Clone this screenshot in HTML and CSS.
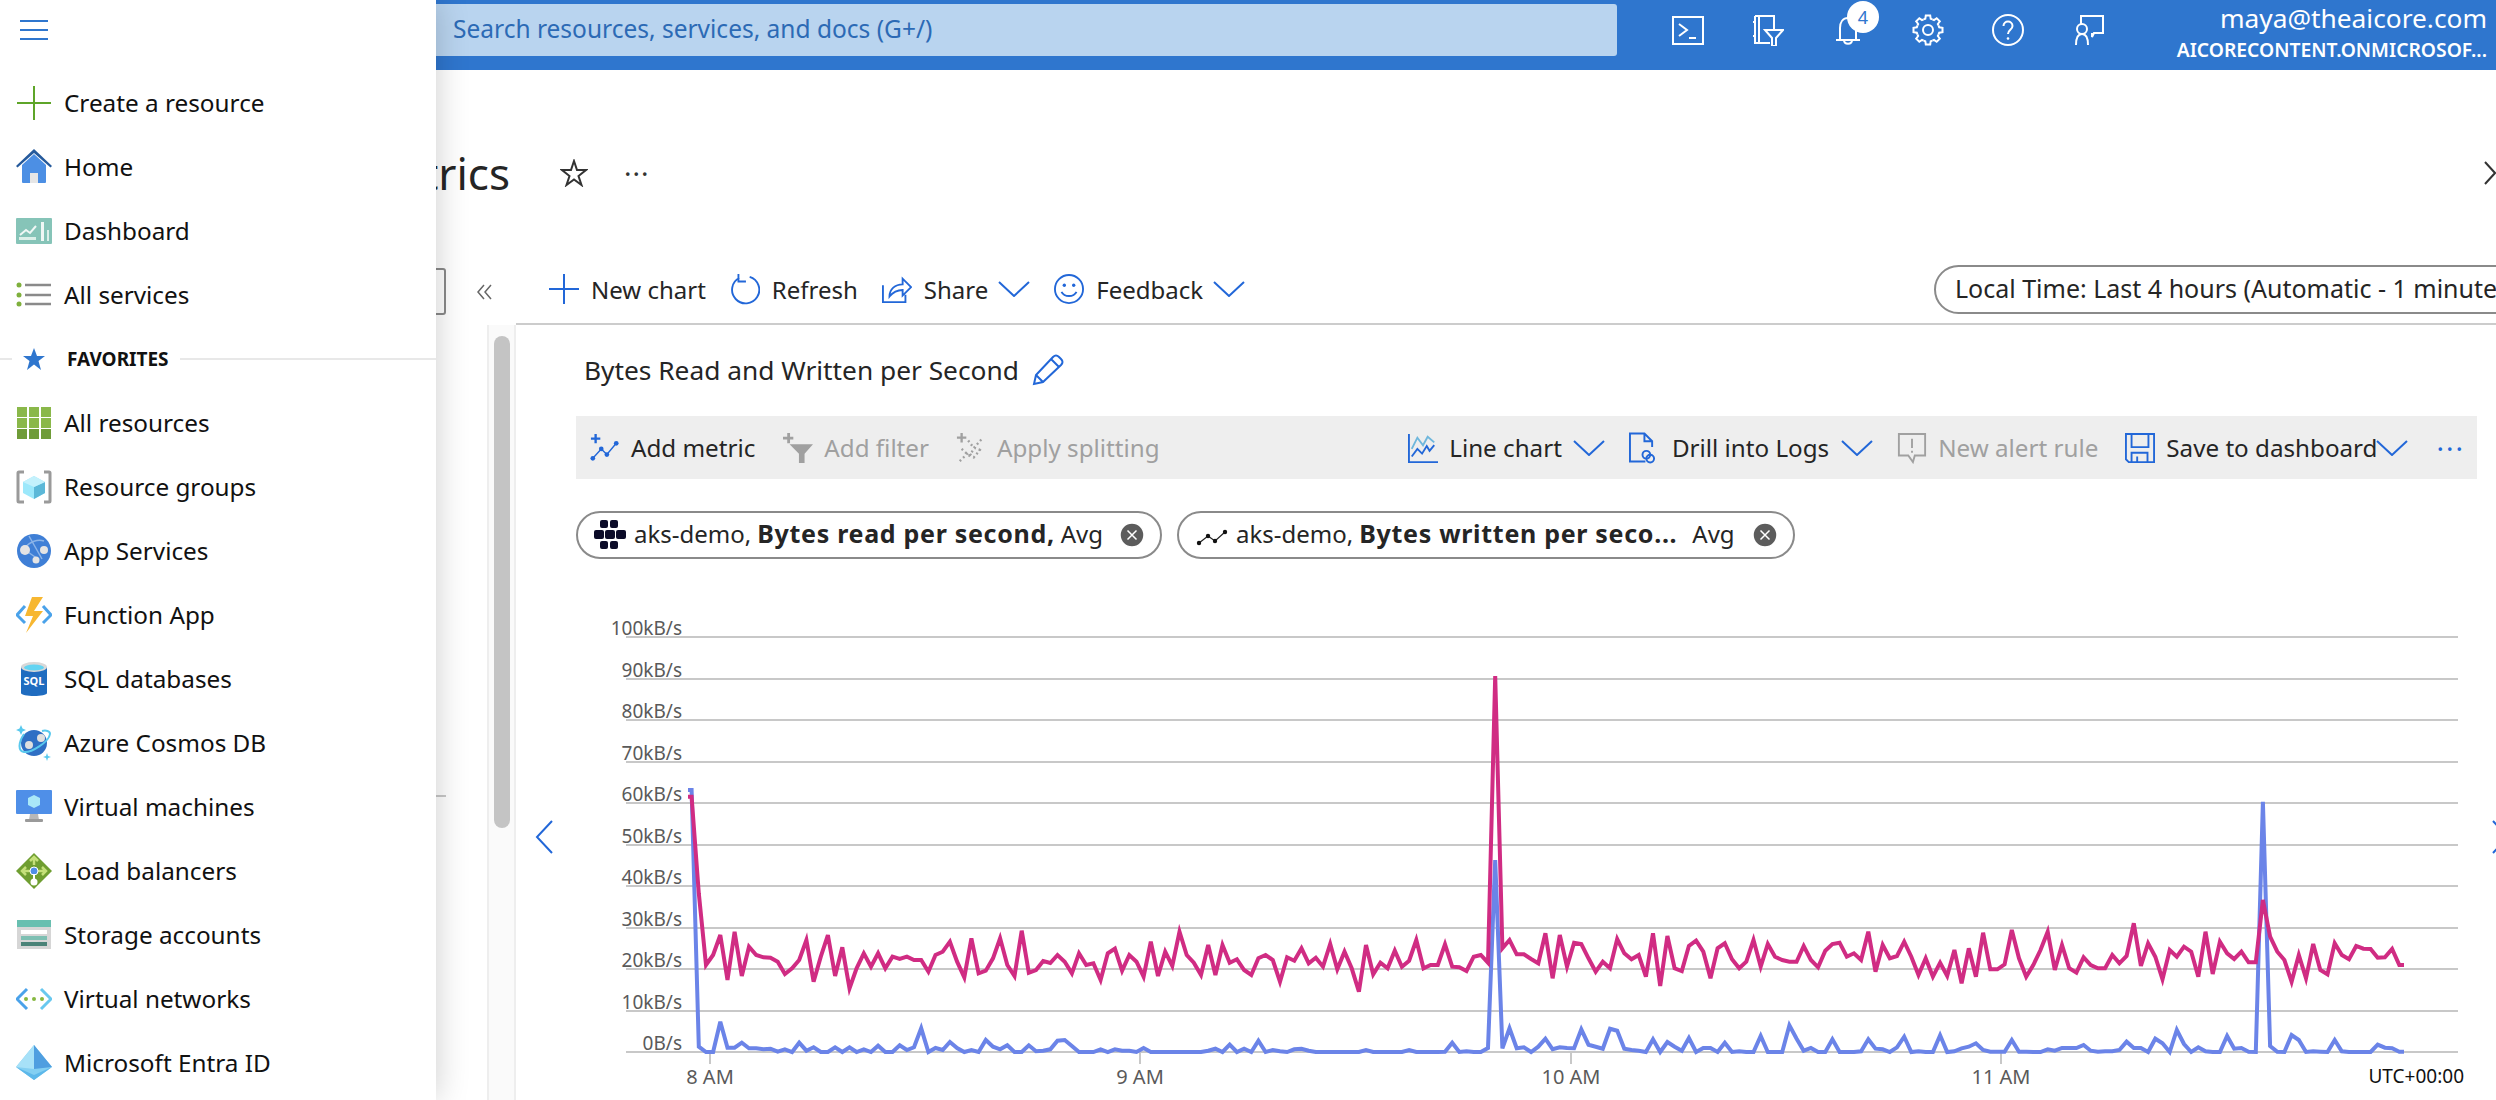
FILE: index.html
```html
<!DOCTYPE html>
<html lang="en">
<head>
    <meta charset="UTF-8">
    <title>aks-demo | Metrics</title>
    <link rel="stylesheet" href="styles.css">
</head>
<body>
    <header class="topbar">
        <div class="search">Search resources, services, and docs (G+/)</div>
        <div class="top-icons">
            <svg class="top-icon" viewBox="0 0 32 32"><rect x="1" y="3" width="30" height="27"/><path d="M7 10l8 6-8 6M17 24h7"/></svg>
            <svg class="top-icon" viewBox="0 0 32 32"><path d="M3 2h19v13M18 29H3V2M1 8h2M1 22h2M7 2v27M13 16h18l-7 8v8h-4v-8z"/></svg>
            <span class="bell">
                <svg class="top-icon" viewBox="0 0 32 32"><path d="M8 26V14c0-6 3-10 8-10s8 4 8 10v12M4 26h24M12 26c0 5 8 5 8 0"/></svg>
                <span class="badge">4</span>
            </span>
            <svg class="top-icon" viewBox="0 0 32 32">
                <polyline id="cog" points="11.6,5.4 13.3,4.8 13.8,1.5 18.2,1.5 18.7,4.8 20.4,5.4"/>
                <use href="#cog" transform="rotate(45 16 16)"/>
                <use href="#cog" transform="rotate(90 16 16)"/>
                <use href="#cog" transform="rotate(135 16 16)"/>
                <use href="#cog" transform="rotate(180 16 16)"/>
                <use href="#cog" transform="rotate(225 16 16)"/>
                <use href="#cog" transform="rotate(270 16 16)"/>
                <use href="#cog" transform="rotate(315 16 16)"/>
                <circle cx="16" cy="16" r="5"/>
            </svg>
            <svg class="top-icon" viewBox="0 0 32 32"><circle cx="16" cy="16" r="15"/><path d="M11.5 12c0-6 9-6 9 0 0 4-4.500 3.500-4.500 8"/><circle class="dot" cx="16" cy="24.500" r="1.300"/></svg>
            <svg class="top-icon" viewBox="0 0 32 32"><path d="M9 10V2h22v17h-9l-2 4v-4M4 31c0-7 2-11 6-11s6 4 6 11"/><circle cx="10" cy="15" r="5"/></svg>
        </div>
        <div class="account">
            <div class="account-mail">maya@theaicore.com</div>
            <div class="account-dir">AICORECONTENT.ONMICROSOF...</div>
        </div>
    </header>

    <nav class="flyout">
        <div class="burger"><span></span><span></span><span></span></div>
        <a class="nav-item">
            <svg class="nav-icon" viewBox="0 0 36 36"><path d="M18 1v34M1 18h34" fill="none" stroke="#5ea529" stroke-width="2"/></svg>
            Create a resource
        </a>
        <a class="nav-item">
            <svg class="nav-icon" viewBox="0 0 36 36"><path d="M6 16L18 5l12 11v17a1 1 0 0 1-1 1H7a1 1 0 0 1-1-1z" fill="#4c8fe4"/><path d="M0 17L18 0l18 17-1.500 1.500L18 4 1.500 18.500z" fill="#255a9c"/><rect x="14" y="24" width="8" height="10" fill="#e6e6e6"/></svg>
            Home
        </a>
        <a class="nav-item">
            <svg class="nav-icon" viewBox="0 0 36 36"><rect y="5" width="36" height="26" rx="1" fill="#86c4b8"/><path d="M4 22l6-5 4 3 6-7" fill="none" stroke="#f0f7f5" stroke-width="2"/><rect x="3" y="24" width="17" height="3" fill="#dcefe9"/><rect x="25" y="9" width="3" height="19" fill="#f0f7f5"/><rect x="31" y="17" width="2" height="11" fill="#dcefe9"/></svg>
            Dashboard
        </a>
        <a class="nav-item">
            <svg class="nav-icon" viewBox="0 0 36 36"><g fill="#7fb03d"><circle cx="3" cy="8" r="2.500"/><circle cx="3" cy="18" r="2.500"/><circle cx="3" cy="27" r="2.500"/></g><path d="M9 8h26M9 18h26M9 27h26" stroke="#8a8a8a" stroke-width="2.500"/></svg>
            All services
        </a>
        <div class="nav-group">
            <svg class="group-star" viewBox="0 0 24 24"><path d="M12 1l3 8h8l-6.500 5 2.500 9-7-5.500L5 23l2.500-9L1 9h8z" fill="#2f76ce"/></svg>
            <span class="group-name">FAVORITES</span>
        </div>
        <a class="nav-item">
            <svg class="nav-icon" viewBox="0 0 36 36"><g fill="#8ab84a"><rect x="1" y="2" width="10" height="10"/><rect x="13" y="2" width="10" height="10"/><rect x="25" y="2" width="10" height="10"/><rect x="1" y="13" width="10" height="10"/><rect x="13" y="13" width="10" height="10"/><rect x="25" y="13" width="10" height="10"/></g><g fill="#6f9c38"><rect x="1" y="24" width="10" height="10"/><rect x="13" y="24" width="10" height="10"/><rect x="25" y="24" width="10" height="10"/></g></svg>
            All resources
        </a>
        <a class="nav-item">
            <svg class="nav-icon" viewBox="0 0 36 36"><path d="M8 3H3a1 1 0 0 0-1 1v28a1 1 0 0 0 1 1h5M28 3h5a1 1 0 0 1 1 1v28a1 1 0 0 1-1 1h-5" fill="none" stroke="#9a9a9a" stroke-width="3"/><path d="M18 7l11 6v11l-11 6-11-6V13z" fill="#9ce8fb"/><path d="M18 18l11-5v11l-11 6z" fill="#5cb8d8"/><path d="M18 7l11 6-11 5-11-5z" fill="#c4f1fc"/></svg>
            Resource groups
        </a>
        <a class="nav-item">
            <svg class="nav-icon" viewBox="0 0 36 36"><circle cx="18" cy="18" r="17" fill="#3f7fd6"/><path d="M8 16C14 8 22 6 28 8M9 17l13 9M13 3l13 23" fill="none" stroke="#8bb4e8" stroke-width="1.500"/><circle cx="9" cy="17" r="5" fill="#e4e4e4"/><circle cx="28" cy="17" r="4" fill="#e4e4e4"/><circle cx="20" cy="27" r="3.500" fill="#e4e4e4"/></svg>
            App Services
        </a>
        <a class="nav-item">
            <svg class="nav-icon" viewBox="0 0 36 36"><path d="M9 9L1 18l8 8M27 9l8 9-8 8" fill="none" stroke="#4aa2ea" stroke-width="3"/><path d="M27 0H16L9 19h8l-7 17 17-22h-9z" fill="#f7b731"/></svg>
            Function App
        </a>
        <a class="nav-item">
            <svg class="nav-icon" viewBox="0 0 36 36"><path d="M5 6v26c0 4 26 4 26 0V6z" fill="#1f6cc0"/><ellipse cx="18" cy="6" rx="13" ry="5" fill="#d8d8d8"/><ellipse cx="18" cy="6.500" rx="10" ry="3" fill="#63d4f2"/><text class="sql-mark" x="18" y="24" text-anchor="middle">SQL</text></svg>
            SQL databases
        </a>
        <a class="nav-item">
            <svg class="nav-icon" viewBox="0 0 36 36"><circle cx="18" cy="18" r="13" fill="#2f6fc4"/><circle cx="13" cy="20" r="4" fill="#dfdfdf"/><circle cx="25" cy="13" r="4" fill="#dfdfdf"/><path d="M8 9C2 18 2 26 8 27c7 1 25-10 26-18 0-3-4-4-8-3" fill="none" stroke="#59c9ee" stroke-width="2"/><path d="M5 0l1.500 3.500L10 5 6.500 6.500 5 10 3.500 6.500 0 5l3.500-1.500zM31 28l1 3 3 1-3 1-1 3-1-3-3-1 3-1z" fill="#59c9ee"/></svg>
            Azure Cosmos DB
        </a>
        <a class="nav-item">
            <svg class="nav-icon" viewBox="0 0 36 36"><rect y="1" width="36" height="24" rx="1" fill="#4f8fe8"/><path d="M18 6l6 3v7l-6 3-6-3V9z" fill="#a9e8f8"/><path d="M14 25h8l1 6H13z" fill="#b8b8b8"/><rect x="9" y="30" width="18" height="3" rx="1" fill="#9a9a9a"/></svg>
            Virtual machines
        </a>
        <a class="nav-item">
            <svg class="nav-icon" viewBox="0 0 36 36"><path d="M18 0l18 18-18 18L0 18z" fill="#6f9e31"/><path d="M18 4v8M14 8l4-4 4 4M6 18h24M10 14l-4 4 4 4M26 14l4 4-4 4" fill="none" stroke="#c5e07a" stroke-width="2.500"/><circle cx="18" cy="18" r="4" fill="#4f8fe8" stroke="#fff" stroke-width="1"/><circle cx="18" cy="29" r="3.500" fill="#fff"/><path d="M18 21v6" stroke="#fff" stroke-width="2"/></svg>
            Load balancers
        </a>
        <a class="nav-item">
            <svg class="nav-icon" viewBox="0 0 36 36"><rect x="1" y="3" width="34" height="7" fill="#68bfb0"/><rect x="1" y="10" width="34" height="22" fill="#d6d6d6"/><rect x="5" y="13" width="26" height="4" fill="#fff"/><rect x="5" y="19" width="26" height="4" fill="#7dbfb2"/><rect x="5" y="25" width="26" height="4" fill="#4a8378"/></svg>
            Storage accounts
        </a>
        <a class="nav-item">
            <svg class="nav-icon" viewBox="0 0 36 36"><path d="M11 8L1 18l10 10" fill="none" stroke="#4aa2ea" stroke-width="3"/><path d="M25 8l10 10-10 10" fill="none" stroke="#68c8ef" stroke-width="3"/><circle cx="10" cy="18" r="2" fill="#86b840"/><circle cx="18" cy="18" r="2" fill="#86b840"/><circle cx="26" cy="18" r="2" fill="#86b840"/></svg>
            Virtual networks
        </a>
        <a class="nav-item">
            <svg class="nav-icon" viewBox="0 0 36 36"><path d="M18 0l18 22-18 13L0 22z" fill="#83cff2"/><path d="M18 0v24L0 22z" fill="#a7e1f8"/><path d="M18 0l18 22-18 2z" fill="#4f9ee0"/><path d="M0 22l18 8 18-8-18 13z" fill="#5db8ea"/></svg>
            Microsoft Entra ID
        </a>
    </nav>

    <main>
        <section class="page-head">
            <h1 class="page-title">Metrics</h1>
            <svg class="fav-star" viewBox="0 0 28 28"><path d="M14 2l3 9h9l-7.500 6 3 9L14 20.500 6.500 26l3-9L2 11h9z"/></svg>
            <span class="page-more">&middot;&middot;&middot;</span>
            <svg class="page-close" viewBox="0 0 12 24"><path d="M1 1l10 11L1 23"/></svg>
        </section>

        <section class="tool-row">
            <div class="tool-left">
                <div class="filter-box"></div>
                <svg class="collapse" viewBox="0 0 18 16"><path d="M8 1L2 8l6 7M15 1L9 8l6 7"/></svg>
            </div>
            <div class="commands">
                <span class="cmd">
                    <svg class="cmd-icon" viewBox="0 0 30 30"><path d="M15 0v30M0 15h30"/></svg>
                    New chart
                </span>
                <span class="cmd">
                    <svg class="cmd-icon" viewBox="0 0 32 32"><path d="M10 4A14.500 14.500 0 1 0 21 3M9 0v8h8"/></svg>
                    Refresh
                </span>
                <span class="cmd">
                    <svg class="cmd-icon" viewBox="0 0 32 32"><path d="M1 12v18h24v-8M8 24c0-8 6-13 14-13V5l9 9-9 9v-6c-6 0-10 2-14 7z"/></svg>
                    Share
                    <svg class="chev" viewBox="0 0 32 16"><path d="M1 1l15 14L31 1"/></svg>
                </span>
                <span class="cmd">
                    <svg class="cmd-icon" viewBox="0 0 32 32"><circle cx="16" cy="16" r="15"/><circle class="dot" cx="11" cy="12" r="1.800"/><circle class="dot" cx="21" cy="12" r="1.800"/><path d="M8 19c3 6 13 6 16 0"/></svg>
                    Feedback
                    <svg class="chev" viewBox="0 0 32 16"><path d="M1 1l15 14L31 1"/></svg>
                </span>
                <div class="time-pill">Local Time: Last 4 hours (Automatic - 1 minute)</div>
            </div>
        </section>

        <section class="body-row">
            <div class="blade-nav"><div class="blade-rule"></div></div>
            <div class="rail"><div class="rail-thumb"></div></div>
            <div class="pane">
                <div class="chart-title">
                    Bytes Read and Written per Second
                    <svg class="pencil" viewBox="0 0 32 32"><path d="M2 30l2-9L21 3c2-2 4-2 6 0l2 2c2 2 2 4 0 6L11 28zM4 21l7 7M19 5l8 8"/></svg>
                </div>

                <div class="chart-tools">
                    <span class="tool">
                        <svg class="tool-icon" viewBox="0 0 32 32"><path d="M3 27l9-10 6 6 10-12" stroke-width="1.500"/><g class="dot"><circle cx="3" cy="27" r="2.500"/><circle cx="12" cy="17" r="2.500"/><circle cx="18" cy="23" r="2.500"/><circle cx="28" cy="11" r="2.500"/></g><path d="M6 1v10M1 6h10" stroke-width="2.500"/></svg>
                        Add metric
                    </span>
                    <span class="tool tool-filter is-off">
                        <svg class="tool-icon" viewBox="0 0 32 32"><path class="dot" d="M7 12h25l-9 10v10h-6V22z"/><path d="M6 0v11M0 5.500h11" stroke-width="3"/></svg>
                        Add filter
                    </span>
                    <span class="tool tool-split is-off">
                        <svg class="tool-icon" viewBox="0 0 32 32"><path d="M4 30l9-9 6 5 9-11M6 17l8 7 6-8 8 3M13 8l6 8 8-9" stroke-dasharray="2 3" stroke-width="2.500"/><path d="M6 0v10M1 5h10" stroke-width="2.500"/></svg>
                        Apply splitting
                    </span>
                    <span class="tool tool-push">
                        <svg class="tool-icon" viewBox="0 0 32 32"><path d="M1 1v30h31"/><path d="M4 17l6-12 6 8 5-9 7 6" stroke="#6fb7dc"/><path d="M4 25l6-8 5 5 5-8 3 5 5-6"/></svg>
                        Line chart
                        <svg class="chev" viewBox="0 0 32 16"><path d="M1 1l15 14L31 1"/></svg>
                    </span>
                    <span class="tool tool-logs">
                        <svg class="tool-icon" viewBox="0 0 28 32"><path d="M17 30H1V1h15l8 8v6M16 1v8h8"/><circle cx="18" cy="23" r="4"/><circle cx="22" cy="27" r="4"/></svg>
                        Drill into Logs
                        <svg class="chev" viewBox="0 0 32 16"><path d="M1 1l15 14L31 1"/></svg>
                    </span>
                    <span class="tool is-off">
                        <svg class="tool-icon" viewBox="0 0 32 32"><path d="M2 1h28v23H19l-2 7-5-7H2zM16 6v10M16 19v2"/></svg>
                        New alert rule
                    </span>
                    <span class="tool tool-save">
                        <svg class="tool-icon" viewBox="0 0 32 32"><path d="M1 1h30v30H4l-3-3zM7 1v14h18V1M7 31V21h17v10M13 25v6"/></svg>
                        Save to dashboard<svg class="chev chev-tight" viewBox="0 0 32 16"><path d="M1 1l15 14L31 1"/></svg>
                    </span>
                    <span class="tool-more">&middot;&middot;&middot;</span>
                </div>

                <div class="metric-row">
                    <div class="metric-pill pill-read">
                        <svg class="pill-icon" viewBox="0 0 32 32"><g fill="#0b0b28"><rect x="6" y="1" width="8" height="8" rx="2"/><rect x="16" y="1" width="8" height="8" rx="2"/><rect x="0" y="11" width="10" height="9" rx="2"/><rect x="11" y="11" width="10" height="9" rx="2"/><rect x="22" y="11" width="10" height="9" rx="2"/><rect x="6" y="22" width="8" height="8" rx="2"/><rect x="16" y="22" width="8" height="8" rx="2"/></g></svg>
                        <span class="metric-name">aks-demo,</span>
                        <b class="metric-bold">Bytes read per second,</b>
                        <span class="metric-agg">Avg</span>
                        <svg class="pill-close" viewBox="0 0 24 24"><circle cx="12" cy="12" r="12"/><path d="M7.500 7.500l9 9M16.500 7.500l-9 9"/></svg>
                    </div>
                    <div class="metric-pill pill-write">
                        <svg class="pill-icon" viewBox="0 0 32 32"><path d="M3 24l9-7 7 5 10-9" fill="none" stroke="#222" stroke-width="1.200"/><g fill="#111"><circle cx="3" cy="24" r="2.200"/><circle cx="12" cy="17" r="2.200"/><circle cx="19" cy="22" r="2.200"/><circle cx="29" cy="13" r="2.200"/></g></svg>
                        <span class="metric-name">aks-demo,</span>
                        <b class="metric-bold metric-cut">Bytes written per seco...</b>
                        <span class="metric-agg">Avg</span>
                        <svg class="pill-close" viewBox="0 0 24 24"><circle cx="12" cy="12" r="12"/><path d="M7.500 7.500l9 9M16.500 7.500l-9 9"/></svg>
                    </div>
                </div>

                <div class="chart">
                    <svg class="plot" viewBox="516 600 1980 500">
                        <g class="grid">
                            <line x1="626" x2="2458" y1="637" y2="637"/>
                            <line x1="626" x2="2458" y1="679" y2="679"/>
                            <line x1="626" x2="2458" y1="720" y2="720"/>
                            <line x1="626" x2="2458" y1="762" y2="762"/>
                            <line x1="626" x2="2458" y1="803" y2="803"/>
                            <line x1="626" x2="2458" y1="845" y2="845"/>
                            <line x1="626" x2="2458" y1="886" y2="886"/>
                            <line x1="626" x2="2458" y1="928" y2="928"/>
                            <line x1="626" x2="2458" y1="969" y2="969"/>
                            <line x1="626" x2="2458" y1="1011" y2="1011"/>
                            <line x1="626" x2="2458" y1="1052" y2="1052"/>
                            <line x1="710" x2="710" y1="1052" y2="1064"/>
                            <line x1="1140" x2="1140" y1="1052" y2="1064"/>
                            <line x1="1571" x2="1571" y1="1052" y2="1064"/>
                            <line x1="2001" x2="2001" y1="1052" y2="1064"/>
                        </g>
                        <g class="y-labels">
                            <text x="682" y="635">100kB/s</text>
                            <text x="682" y="677">90kB/s</text>
                            <text x="682" y="718">80kB/s</text>
                            <text x="682" y="760">70kB/s</text>
                            <text x="682" y="801">60kB/s</text>
                            <text x="682" y="843">50kB/s</text>
                            <text x="682" y="884">40kB/s</text>
                            <text x="682" y="926">30kB/s</text>
                            <text x="682" y="967">20kB/s</text>
                            <text x="682" y="1009">10kB/s</text>
                            <text x="682" y="1050">0B/s</text>
                        </g>
                        <g class="x-labels">
                            <text x="710" y="1084">8 AM</text>
                            <text x="1140" y="1084">9 AM</text>
                            <text x="1571" y="1084">10 AM</text>
                            <text x="2001" y="1084">11 AM</text>
                        </g>
                        <text class="zone" x="2464" y="1083">UTC+00:00</text>
                        <polyline id="writes" class="series series-write"/>
                        <polyline id="reads" class="series series-read"/>
                    </svg>
                    <svg class="chart-nav nav-prev" viewBox="0 0 18 34"><path d="M17 1L2 17l15 16"/></svg>
                    <svg class="chart-nav nav-next" viewBox="0 0 18 34"><path d="M1 1l15 16L1 33"/></svg>
                </div>
            </div>
        </section>
    </main>

    <script src="script.js"></script>
</body>
</html>
```

FILE: styles.css
```css
* {
    margin: 0;
    padding: 0;
    box-sizing: border-box;
}
html, body {
    width: 2496px;
    height: 1100px;
    overflow: hidden;
}
body {
    background-color: #ffffff;
    color: #252525;
    font-family: "Noto Sans", "Open Sans", sans-serif;
    font-size: 24px;
}
svg {
    display: block;
    flex: none;
}

/* top bar */
.topbar {
    height: 70px;
    background-color: #2f76ce;
    display: flex;
    align-items: flex-start;
    color: #ffffff;
}
.search {
    margin: 4px 0 0 436px;
    width: 1181px;
    height: 52px;
    padding-left: 17px;
    font-size: 24.5px;
    line-height: 50px;
    background-color: #b9d4ef;
    border-radius: 0 3px 3px 0;
    color: #2c6ab5;
}
.top-icons {
    display: flex;
    align-items: center;
    gap: 48px;
    margin: 14px 0 0 55px;
}
.top-icon {
    width: 32px;
    height: 32px;
    fill: none;
    stroke: #ffffff;
    stroke-width: 2;
}
.top-icon .dot {
    fill: #ffffff;
    stroke: none;
}
.bell {
    position: relative;
}
.badge {
    position: absolute;
    left: 15px;
    top: -13px;
    width: 32px;
    height: 32px;
    border-radius: 50%;
    background-color: #ffffff;
    color: #2f76ce;
    font-size: 18px;
    line-height: 32px;
    text-align: center;
}
.account {
    margin-left: auto;
    padding: 0 9px 0 0;
    text-align: right;
}
.account-mail {
    font-size: 26.3px;
    line-height: 36px;
}
.account-dir {
    font-size: 19.3px;
    font-weight: 600;
    line-height: 28px;
}

/* flyout menu */
.flyout {
    position: absolute;
    left: 0;
    top: 0;
    width: 436px;
    height: 1100px;
    background-color: #ffffff;
    box-shadow: 0 0 32px rgba(0, 0, 0, 0.2);
    z-index: 5;
    overflow: hidden;
}
.burger {
    height: 72px;
    padding: 20px 0 0 20px;
    display: flex;
    flex-direction: column;
    gap: 7px;
}
.burger span {
    width: 28px;
    height: 2px;
    background-color: #2f76ce;
}
.nav-item {
    height: 64px;
    display: flex;
    align-items: center;
    gap: 12px;
    padding: 0 0 3px 16px;
    font-size: 24.3px;
    color: #111111;
}
.nav-icon {
    width: 36px;
    height: 36px;
}
.sql-mark {
    fill: #ffffff;
    font-size: 11px;
    font-weight: 700;
}
.nav-group {
    height: 64px;
    display: flex;
    align-items: center;
    padding: 0 0 2px 22px;
}
.nav-group::before,
.nav-group::after {
    content: "";
    height: 2px;
    background-color: #e8e8e8;
}
.nav-group::before {
    width: 12px;
    margin-left: -22px;
    margin-right: 10px;
}
.nav-group::after {
    flex: 1;
    margin-left: 11px;
}
.group-star {
    width: 24px;
    height: 24px;
}
.group-name {
    margin-left: 21px;
    font-size: 19px;
    font-weight: 700;
    color: #111111;
}

/* page header */
.page-head {
    height: 180px;
    display: flex;
    align-items: center;
    padding-top: 25px;
}
.page-title {
    width: 510px;
    flex: none;
    text-align: right;
    white-space: nowrap;
    font-size: 44px;
    font-weight: 400;
    color: #252525;
}
.fav-star {
    width: 28px;
    height: 28px;
    margin-left: 50px;
    fill: none;
    stroke: #333333;
    stroke-width: 2;
}
.page-more {
    margin-left: 36px;
    font-size: 28px;
    line-height: 1;
    color: #333333;
    letter-spacing: 1px;
}
.page-close {
    width: 12px;
    height: 24px;
    margin-left: auto;
    fill: none;
    stroke: #333333;
    stroke-width: 2;
}

/* command row */
.tool-row {
    height: 75px;
    display: flex;
}
.tool-left {
    width: 516px;
    flex: none;
    display: flex;
    align-items: flex-start;
    padding-top: 18px;
}
.filter-box {
    width: 446px;
    height: 47px;
    border: 2px solid #8a8a8a;
    border-radius: 3px;
}
.collapse {
    width: 18px;
    height: 16px;
    margin: 16px 0 0 30px;
    fill: none;
    stroke: #666666;
    stroke-width: 1.5;
}
.commands {
    flex: 1;
    min-width: 0;
    display: flex;
    align-items: center;
    gap: 24px;
    padding: 5px 0 0 33px;
    border-bottom: 2px solid #cccccc;
    overflow: hidden;
}
.cmd {
    display: flex;
    align-items: center;
    gap: 12px;
    white-space: nowrap;
}
.cmd .chev {
    margin-left: -2px;
}
.cmd-icon {
    width: 30px;
    height: 32px;
    fill: none;
    stroke: #2267d8;
    stroke-width: 2;
}
.cmd-icon .dot {
    fill: #2267d8;
    stroke: none;
}
.chev {
    width: 32px;
    height: 16px;
    fill: none;
    stroke: #2267d8;
    stroke-width: 2;
}
.chev-tight {
    margin-left: -12px;
}
.time-pill {
    margin-left: auto;
    flex: none;
    width: 602px;
    height: 49px;
    margin-right: -40px;
    padding-left: 19px;
    font-size: 25px;
    line-height: 43px;
    border: 2px solid #8a8a8a;
    border-radius: 25px;
    white-space: nowrap;
    overflow: hidden;
}

/* scroll rail and chart pane */
.body-row {
    display: flex;
    height: 775px;
}
.blade-nav {
    width: 487px;
    flex: none;
    padding-top: 470px;
}
.blade-rule {
    width: 446px;
    height: 2px;
    background-color: #c8c8c8;
}
.rail {
    width: 29px;
    flex: none;
    padding: 11px 6px 0 7px;
    background-color: #fafafa;
    border-left: 2px solid #eeeeee;
    border-right: 2px solid #eeeeee;
}
.rail-thumb {
    height: 492px;
    margin-left: -2px;
    width: 16px;
    border-radius: 8px;
    background-color: #c4c4c4;
}
.pane {
    flex: 1;
    min-width: 0;
    padding: 0 19px 0 60px;
}
.chart-title {
    height: 91px;
    display: flex;
    align-items: center;
    gap: 13px;
    padding: 0 0 1px 8px;
    font-size: 26.3px;
}
.pencil {
    width: 32px;
    height: 32px;
    fill: none;
    stroke: #2267d8;
    stroke-width: 2;
}
.chart-tools {
    height: 63px;
    display: flex;
    align-items: center;
    gap: 24px;
    padding: 0 12px 0 14px;
    font-size: 24.2px;
    background-color: #eeeeee;
}
.tool {
    display: flex;
    align-items: center;
    gap: 11px;
    white-space: nowrap;
}
.tool-icon {
    width: 30px;
    height: 32px;
    fill: none;
    stroke: #2267d8;
    stroke-width: 2;
}
.tool-icon .dot {
    fill: #2267d8;
    stroke: none;
}
.tool-filter {
    margin-left: 4px;
}
.tool-split {
    margin-left: 3px;
}
.tool-push {
    margin-left: auto;
}
.tool-logs {
    gap: 12px;
}
.tool-logs .tool-icon {
    width: 27px;
    margin-right: 4px;
}
.tool-save {
    margin-left: 3px;
}
.tool.is-off {
    color: #a0a0a0;
}
.is-off .tool-icon {
    stroke: #a0a0a0;
}
.is-off .tool-icon .dot {
    fill: #a0a0a0;
}
.tool-more {
    margin-left: 4px;
    color: #2267d8;
    font-size: 28px;
    letter-spacing: 2px;
    line-height: 1;
}
.metric-row {
    display: flex;
    gap: 15px;
    margin: 32px 0 41px;
}
.metric-pill {
    height: 48px;
    display: flex;
    align-items: center;
    border: 2px solid #8a8a8a;
    border-radius: 24px;
    white-space: nowrap;
}
.pill-read {
    width: 586px;
    padding-left: 16px;
}
.pill-write {
    width: 618px;
    padding-left: 17px;
}
.pill-icon {
    width: 32px;
    height: 32px;
    margin-right: 8px;
}
.metric-name,
.metric-bold,
.metric-agg {
    margin-bottom: 4px;
}
.metric-bold {
    margin-left: 6px;
    font-size: 25px;
    font-weight: 700;
    letter-spacing: 0.7px;
}
.metric-agg {
    margin-left: 6px;
}
.metric-cut + .metric-agg {
    margin-left: 15px;
}
.pill-close {
    width: 24px;
    height: 24px;
    margin-left: auto;
    margin-right: 16px;
    fill: #5c5c5c;
    stroke: #ffffff;
    stroke-width: 1.5;
}

/* chart */
.chart {
    position: relative;
    margin: 0 -19px 0 -60px;
}
.plot {
    width: 1980px;
    height: 500px;
    font-size: 20px;
}
.grid line {
    stroke: #c8c8c8;
    stroke-width: 2;
}
.y-labels text {
    text-anchor: end;
    fill: #5a5a5a;
    font-size: 19px;
}
.x-labels text {
    text-anchor: middle;
    fill: #5a5a5a;
}
.zone {
    text-anchor: end;
    fill: #111111;
    font-size: 19px;
}
.series {
    fill: none;
    stroke-width: 4;
}
.series-read {
    stroke: #d02c83;
}
.series-write {
    stroke: #6b84e8;
}
.chart-nav {
    position: absolute;
    top: 220px;
    width: 18px;
    height: 34px;
    fill: none;
    stroke: #2267d8;
    stroke-width: 2;
}
.nav-prev {
    left: 19px;
}
.nav-next {
    left: 1976px;
}
```

FILE: script.js
```js
// samples read off the chart, one a minute, y in thirds of a pixel below page y 780
var reads = [
    50, 340, 555, 525, 465, 600, 455, 588, 500, 525, 532, 533, 545, 582, 565, 540, 480, 605, 530, 465,
    588, 502, 625, 565, 520, 560, 520, 565, 530, 537, 530, 540, 540, 575, 525, 515, 485, 545, 592, 475,
    580, 572, 535, 475, 555, 588, 452, 578, 570, 543, 549, 525, 545, 580, 520, 555, 550, 600, 520, 506,
    572, 525, 545, 590, 485, 588, 515, 558, 455, 525, 548, 585, 495, 585, 495, 548, 538, 570, 585, 535,
    525, 540, 605,
    532, 542, 505, 550, 533, 560, 492, 568, 515, 565, 635, 495, 583, 548, 565, 512, 560, 542, 480, 565,
    555, 555, 493, 560, 562, 573, 530, 525, 548, -312, 505, 480, 523, 523, 537, 550, 460, 595, 465, 560,
    488, 492, 535, 575, 545, 565, 477, 520, 538, 525, 590, 460, 618, 468, 565, 573, 498, 482, 515, 595,
    505, 490, 538, 565, 545, 480, 560, 492, 530, 540, 545, 545, 498, 540, 562, 512, 492, 488, 530, 520,
    540, 455, 575, 495, 535, 528, 485, 530, 585, 535, 590, 548, 588, 510, 610,
    505, 590, 458, 568, 568, 553, 450, 535, 590, 555, 510, 455, 570, 495, 565, 578, 532, 555, 565, 565,
    525, 550, 528, 430, 558, 490, 530, 598, 510, 530, 500, 515, 590, 455, 582, 485, 520, 537, 515, 547,
    547, 360, 470, 515, 540, 605, 525, 595, 492, 570, 583, 490, 525, 538, 498, 506, 507, 533, 532, 507, 555
];
var writes = [
    30, 800, 816, 816, 725, 803, 803, 788, 805, 805, 808, 806, 815, 808, 816, 788, 812, 802, 816, 816,
    802, 816, 802, 816, 808, 816, 797, 816, 816, 796, 810, 802, 745, 816, 804, 810, 786, 804, 816, 810,
    816, 780, 800, 808, 796, 816, 816, 796, 814, 812, 808, 782, 780, 798, 816, 816, 816, 808, 816, 808,
    812, 812, 816, 804, 816, 816, 816, 816, 816, 816, 816, 816, 812, 806, 816, 794, 816, 806, 816, 782,
    816, 810, 814,
    816, 808, 806, 812, 816, 816, 816, 816, 816, 816, 816, 810, 816, 816, 816, 816, 816, 810, 816, 816,
    816, 816, 815, 788, 816, 814, 816, 816, 804, 240, 805, 745, 805, 802, 816, 800, 776, 808, 802, 804,
    805, 748, 794, 800, 806, 746, 752, 806, 810, 812, 816, 778, 816, 786, 800, 812, 774, 816, 804, 804,
    816, 788, 816, 814, 816, 816, 768, 816, 816, 816, 736, 776, 812, 804, 816, 816, 778, 816, 816, 816,
    814, 778, 806, 808, 816, 802, 770, 816, 814, 816, 816, 766, 816, 814, 805,
    800, 790, 810, 815, 815, 815, 780, 815, 815, 816, 816, 808, 812, 804, 804, 804, 795, 812, 815, 814,
    814, 810, 785, 804, 804, 816, 776, 790, 816, 750, 792, 816, 802, 814, 816, 816, 768, 806, 804, 815,
    816, 65, 798, 815, 816, 765, 780, 816, 814, 815, 816, 780, 814, 816, 816, 816, 816, 794, 803, 805, 815
];

function draw(id, data) {
    var pts = [];
    for (var i = 0; i < data.length; i++) {
        pts.push((691.6 + i * 7.175).toFixed(1) + "," + (780 + data[i] / 3).toFixed(1));
    }
    // the first and last samples run on a little past the data
    pts.unshift("688," + (780 + data[0] / 3).toFixed(1));
    pts.push("2404," + (780 + data[data.length - 1] / 3).toFixed(1));
    document.getElementById(id).setAttribute("points", pts.join(" "));
}

draw("reads", reads);
draw("writes", writes);
```
